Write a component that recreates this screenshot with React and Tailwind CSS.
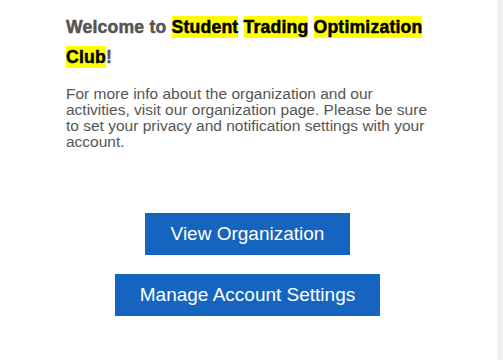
const hl = "bg-[#ffff00] text-black py-px";

export default function App() {
  return (
    <div className="flex h-[360px] w-full bg-white font-['Liberation_Sans',Arial,sans-serif]">
      <div className="flex-1 pr-[2px]">
        <div className="pl-[66px] pt-[12px]">
          <div className="w-[368px]">
            <h1 className="text-[17.6px] font-bold leading-[30px] tracking-[0.2px] text-[#555555] [-webkit-text-stroke:0.5px]">
              Welcome to <span className={hl}>Student</span>{" "}
              <span className={hl}>Trading</span>{" "}
              <span className={hl}>Optimization</span>{" "}
              <span className={hl}>Club</span>!
            </h1>
            <p className="mt-[14px] text-[15.5px] leading-[16px] text-[#555555]">
              For more info about the organization and our activities, visit our
              organization page. Please be sure to set your privacy and
              notification settings with your account.
            </p>
          </div>
        </div>

        <div className="mt-[63px] flex flex-col items-center gap-[19px]">
          <button className="bg-[#1565c0] px-[26px] py-[10px] text-[19px] leading-[22px] text-white">
            View Organization
          </button>
          <button className="bg-[#1565c0] px-[25px] py-[10px] text-[19px] leading-[22px] text-white">
            Manage Account Settings
          </button>
        </div>
      </div>
      <div className="w-[6px] bg-[#f1f1f1]" />
    </div>
  );
}
